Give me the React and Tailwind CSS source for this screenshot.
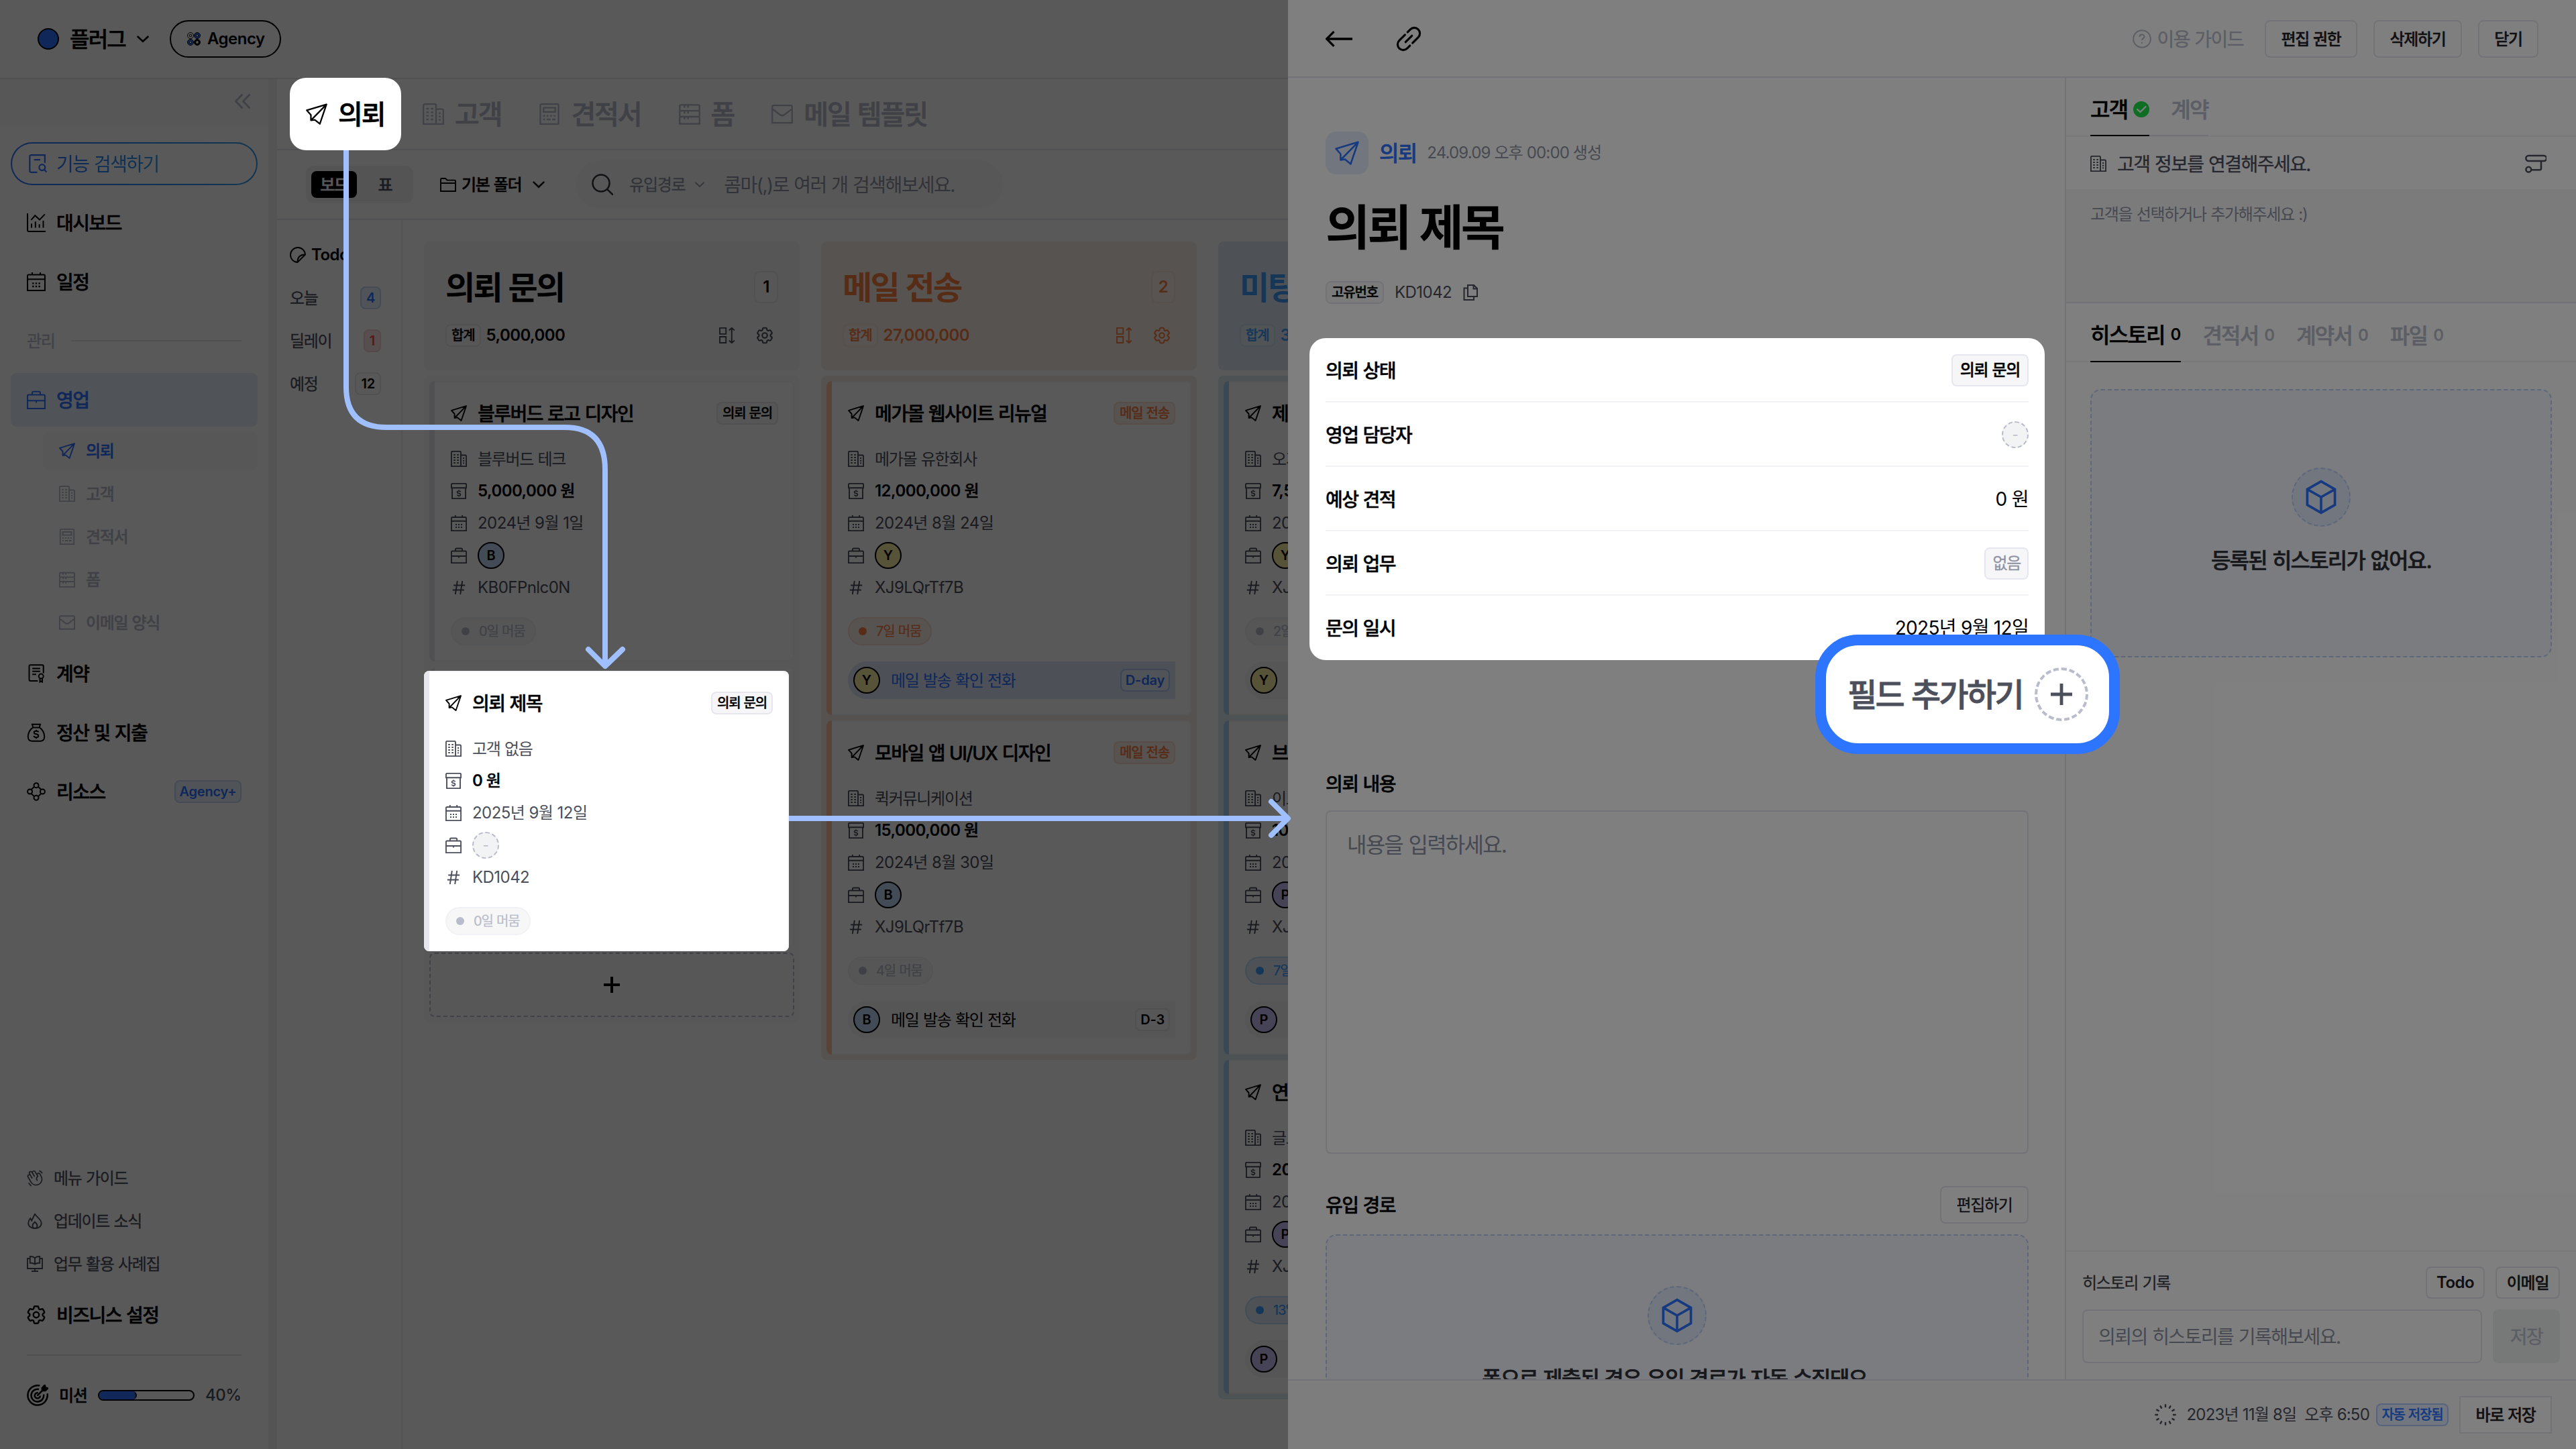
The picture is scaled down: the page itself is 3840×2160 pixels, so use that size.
import { HiOutlineCog6Tooth } from "react-icons/hi2";
import { PiHandWaving } from "react-icons/pi";

const ko20 = "text-[20px] leading-[28px] tracking-[-1.15px] [word-spacing:0.8px] whitespace-nowrap";
const ko24 = "text-[24px] leading-[34px] tracking-[-1.3px] [word-spacing:1px] whitespace-nowrap pt-px";
const ko28 = "text-[28px] leading-[40px] tracking-[-1.55px] [word-spacing:1.2px] whitespace-nowrap pt-[2px]";
const ko32 = "text-[32px] leading-[46px] tracking-[-1.8px] [word-spacing:1.4px] whitespace-nowrap pt-[2px]";
const ko40 = "text-[40px] leading-[56px] tracking-[-2.1px] [word-spacing:1.6px] whitespace-nowrap pt-px";
const ko48 = "text-[48px] leading-[64px] tracking-[-2.7px] [word-spacing:2px] whitespace-nowrap pt-[2px]";
const num20 = "text-[20px] leading-[28px] tracking-[-0.2px] whitespace-nowrap";
const num24 = "text-[24px] leading-[34px] tracking-[-0.55px] whitespace-nowrap";

// the CJK face has no weights between regular and bold, a thin stroke fills the gap
const semi = "font-medium [-webkit-text-stroke:0.016em]";
const medium = "font-normal [-webkit-text-stroke:0.012em]";

/* ---------- icons ---------- */

function Svg({ className = "size-6", sw = 1.9, children }) {
  return (
    <svg
      viewBox="0 0 24 24"
      fill="none"
      stroke="currentColor"
      strokeWidth={sw}
      className={`shrink-0 ${className}`}
    >
      {children}
    </svg>
  );
}

const PlaneIcon = (p) => (
  <Svg {...p}>
    <path d="M23 1.2 1 7.8l4.6 5.2v6l4.4-.6 5.6 4.6L23 1.2ZM23 1.2 5.6 19" strokeLinejoin="round" />
  </Svg>
);

const BuildingIcon = (p) => (
  <Svg {...p}>
    <path d="M.9 23.1V2.5Q.9.9 2.5.9h11Q15 .9 15 2.5v20.6H.9ZM15 6.5h6.500q1.600 0 1.600 1.600v15H15" />
    <path d="M4.200 6h2.600M9.300 6h2.600M4.200 10h2.600M9.300 10h2.600M4.200 14h2.600M9.300 14h2.600M4.200 18h2.600M9.300 18h2.600M18 11h2.200M18 14.700h2.200M18 18.400h2.200" />
  </Svg>
);

const EstimateIcon = (p) => (
  <Svg {...p}>
    <path d="M1.800 23.100V2.500q0-1.600 1.600-1.600h17.200q1.600 0 1.600 1.600v20.600H1.800ZM5.500 5h13v4.600h-13z" />
    <path d="M5 14h2M8.900 14h2M12.800 14h2M16.800 14h2M5 18h2M8.900 18h4.500M15 18h3.800" />
  </Svg>
);

const FormIcon = (p) => (
  <Svg {...p}>
    <path d="M2.500 1.800h19q1.600 0 1.600 1.600v3.400q0 1.600-1.600 1.600h-19Q.9 8.400.9 6.800V3.400q0-1.600 1.600-1.600ZM2.500 8.400h19q1.600 0 1.600 1.600v3.400q0 1.600-1.600 1.600h-19Q.9 15 .9 13.400V10q0-1.600 1.600-1.600ZM2.500 15h19q1.600 0 1.600 1.600v6.300H.9v-6.300Q.9 15 2.500 15Z" />
    <path d="M6.200 2v2.800M10.200 2v2.800M6.200 8.500v2.800M10.200 8.500v2.800M6.200 15v2.800M10.200 15v2.800" />
  </Svg>
);

const MailIcon = (p) => (
  <Svg {...p}>
    <path d="M.9 21.800V3.900q0-1.600 1.600-1.600h19q1.600 0 1.600 1.600v17.900H.9Z" />
    <path d="m1.300 6.500 8 6.200q2.700 2 5.400 0l8-6.200" />
  </Svg>
);

const BriefcaseIcon = (p) => (
  <Svg {...p}>
    <path d="M.9 23.100V7q0-1.500 1.500-1.500h19.200Q23.100 5.500 23.100 7v16.100H.9ZM6.900 5.500V3q0-1.500 1.500-1.500h7.200q1.500 0 1.500 1.500v2.500M.9 13h22.200M12 13v2.600" />
  </Svg>
);

const CalendarIcon = (p) => (
  <Svg {...p}>
    <path d="M.9 23.100V4.500q0-1.500 1.500-1.500h19.200q1.500 0 1.500 1.500v18.600H.9ZM.9 8.800h22.200M6.800 0v3M17.200 0v3" />
    <path d="M7 14h2M11 14h2M15 14h2M7 18h2M11 18h2M15 18h2" strokeWidth="2" />
  </Svg>
);

const MoneyBoxIcon = (p) => (
  <Svg {...p}>
    <path d="M.9 7.200V2.500Q.9.900 2.500.900h19q1.600 0 1.600 1.600v4.700H.9ZM2 7.200v15.900h20V7.200" />
    <path d="M14.700 13.300q-.5-1.300-2.700-1.300-2.500 0-2.500 1.700 0 1.300 2.500 1.700t2.500 1.800q0 1.700-2.500 1.700-2.200 0-2.700-1.500M12 10.500v1.600M12 18.900v1.500" strokeWidth="1.600" />
  </Svg>
);

const HashIcon = (p) => (
  <Svg {...p}>
    <path d="M9.800 2 6.800 22M17.200 2l-3 20M4.200 8.500h17M2.800 15.500h17" />
  </Svg>
);

const SortIcon = (p) => (
  <Svg {...p}>
    <path d="M1 .900h9.200v9H1zM1 14h9.200v9H1zM18.800 2v20M14.800 4.500 18.800.8l4 3.700M14.800 19.500l4 3.700 4-3.700" />
  </Svg>
);

const FolderIcon = (p) => (
  <Svg {...p}>
    <path d="M1 22V4.400Q1 3 2.400 3H8l2.800 2.600H21.600q1.400 0 1.400 1.400v15H1ZM1 10h22" />
  </Svg>
);

const SearchIcon = (p) => (
  <Svg {...p}>
    <circle cx="10.500" cy="10.500" r="9.400" />
    <path d="m17.500 17.500 6 5.800" strokeLinecap="round" />
  </Svg>
);

const FeatureIcon = (p) => (
  <Svg {...p}>
    <path d="M11.500 23H3.700Q2 23 2 21.300V2.700Q2 1 3.700 1h17.600v10M7.500 7h8" />
    <circle cx="17.800" cy="16.800" r="3.800" />
    <path d="m20.500 19.600 3 3.200" />
  </Svg>
);

const DashboardIcon = (p) => (
  <Svg {...p}>
    <path d="M.9 0v21.500q0 1.600 1.600 1.600H24" />
    <path d="M6 18.500v-5.500M11 18.500v-8M16 18.500v-4.500M21 18.500V9.500M5.500 8.500 10.500 2.800l5.800 5.400L23 1.200" />
  </Svg>
);

const ContractIcon = (p) => (
  <Svg {...p}>
    <path d="M14 21.500H4.600Q3 21.500 3 19.900V2.600Q3 1 4.600 1h15q1.600 0 1.600 1.600v9M7 5.500h10M7 9.200h10M7 13h5" />
    <circle cx="18.200" cy="15.500" r="3" />
    <path d="M16.700 18.200v4.600l1.500-1 1.500 1v-4.600" />
  </Svg>
);

const MoneyBagIcon = (p) => (
  <Svg {...p}>
    <path d="M8 5.500 6.800 1.500h10.400L16 5.500M8 5.500h8M8 5.500C4 7.600 1.500 13 1.500 17.200 1.500 21 3.500 23 7 23h10c3.500 0 5.500-2 5.500-5.800C22.500 13 20 7.600 16 5.500" />
    <path d="M15 11.500q-.6-1.500-3-1.500-2.800 0-2.800 2 0 1.600 2.800 2t2.800 2.200q0 2-2.800 2-2.500 0-3.100-1.800M12 8.500V10M12 18.500V20" />
  </Svg>
);

const ResourceIcon = (p) => (
  <Svg {...p}>
    <circle cx="12" cy="4" r="3" />
    <circle cx="12" cy="20" r="3" />
    <circle cx="3.900" cy="12" r="3" />
    <circle cx="20.100" cy="12" r="3" />
    <path d="M9.500 5.800 5.700 9.400M14.500 5.800l3.800 3.600M9.500 18.200l-3.800-3.600M14.500 18.200l3.800-3.600" />
  </Svg>
);

const FlameIcon = (p) => (
  <Svg {...p}>
    <path d="M12.200 1.200c.3 4 9.500 7.500 9.500 14.300 0 4.600-4 7.600-9.500 7.600s-10-3-10-7.600c0-3 1.300-5.300 3-7.300l2 3.300c1.500-3 3.400-6.500 5-10.300Z" />
    <path d="M12 13.500c-2 1.800-3.500 3.300-3.500 5.600 0 2.500 1.500 4 3.500 4s3.500-1.500 3.500-4c0-2.300-1.500-3.800-3.500-5.600Z" />
  </Svg>
);

const CasebookIcon = (p) => (
  <Svg {...p}>
    <path d="M4.500 4H1v15h22V4h-3.500M12 19v4M7 23h10M12 3.500C10 1 7.500.8 4.800 1v9.800c2.700-.2 5.200 0 7.200 1.700 2-1.700 4.500-1.900 7.200-1.700V1C16.500.8 14 1 12 3.500Zm0 0v9" />
  </Svg>
);

const TargetIcon = (p) => (
  <Svg {...p}>
    <path d="M14.500 1.200A11 11 0 1 0 22.900 10M13.500 5.300A7 7 0 1 0 18.800 11M12.500 9.200A3.100 3.100 0 1 0 15 12.500M11.500 12.500 18 6" />
    <path d="M17.200 6.800V3.500L20 .8l.8 2.500 2.600.8-2.800 2.700Z" fill="currentColor" />
  </Svg>
);

const StickerIcon = (p) => (
  <Svg {...p}>
    <path d="M11.500 23A11 11 0 1 1 23 11.500L11.500 23ZM11.500 23c0-8 3.500-11.500 11.500-11.500" />
  </Svg>
);

const ChevronDown = (p) => (
  <Svg {...p}>
    <path d="m3 8 9 8.500L21 8" strokeLinecap="round" />
  </Svg>
);

const CubeIcon = (p) => (
  <Svg {...p}>
    <path d="M12 1.200 21.500 6.600v10.800L12 22.800 2.500 17.400V6.600L12 1.200ZM2.500 6.600 12 12l9.500-5.400M12 12v10.800" />
  </Svg>
);

const LinkIcon = (p) => (
  <Svg {...p}>
    <g transform="rotate(-45 12 12)" strokeLinecap="round">
      <path d="M8.500 17H5a5 5 0 0 1 0-10h7.200M15.500 7H19a5 5 0 0 1 0 10h-7.200M8 12h8" />
    </g>
  </Svg>
);

const CopyIcon = (p) => (
  <Svg {...p}>
    <path d="M8 1h9l5 5v12H8V1ZM16.500 1v5.500H22M8 5.500H2.500V23H17v-5" />
  </Svg>
);

const ConnectIcon = (p) => (
  <Svg {...p}>
    <path d="M4 3h17a2.400 2.400 0 0 1 0 6H4a2.900 2.900 0 0 1 0-6ZM7 19h9.500q1.500 0 1.500-1.500V9.500" />
    <circle cx="4" cy="18.500" r="2.900" />
  </Svg>
);

const GearIcon = ({ large }) => (
  <HiOutlineCog6Tooth
    strokeWidth={1.7}
    className={`shrink-0 ${large ? "-mx-[3px] size-[34px]" : "-m-[3px] size-[30px]"}`}
  />
);

const WaveIcon = () => <PiHandWaving className="-mx-0.5 size-7 shrink-0" />;

function AgencyMark() {
  return (
    <svg viewBox="0 0 20 20" className="size-5">
      <g strokeWidth="2.600" fill="none">
        <circle cx="5" cy="5" r="3.200" stroke="#fff" />
        <circle cx="15" cy="5" r="3.200" stroke="#2d72ff" />
        <circle cx="5" cy="15" r="3.200" stroke="#2d72ff" />
        <circle cx="15" cy="15" r="3.200" stroke="#000" />
      </g>
      <g fill="none" stroke="#000" strokeWidth=".9">
        <circle cx="5" cy="5" r="4.500" />
        <circle cx="15" cy="5" r="4.500" />
        <circle cx="5" cy="15" r="4.500" />
        <circle cx="15" cy="15" r="4.500" />
        <circle cx="5" cy="5" r="1.800" />
        <circle cx="15" cy="5" r="1.800" />
        <circle cx="5" cy="15" r="1.800" />
      </g>
    </svg>
  );
}

function Spinner() {
  return (
    <Svg className="size-8" sw={1.800}>
      {Array.from({ length: 12 }).map((_, i) => (
        <path key={i} d="M12 .2v3.600" transform={`rotate(${i * 30} 12 12)`} />
      ))}
    </Svg>
  );
}

/* ---------- sidebar ---------- */

function NavRow({ icon: Icon, label, active, children }) {
  return (
    <div
      className={`flex h-20 items-center gap-4 rounded-lg px-6 ${
        active ? "bg-[#e5eefb] text-[#2d72ff]" : "text-black"
      }`}
    >
      <Icon className="size-7" sw={1.7} large />
      <span className={`${ko28} ${semi}`}>{label}</span>
      {children}
    </div>
  );
}

function SubRow({ icon: Icon, label, active }) {
  return (
    <div
      className={`ml-12 flex h-14 items-center gap-4 rounded-lg px-6 ${
        active ? "bg-[#f9fafd] text-[#2d72ff]" : "text-[#b8bccb]"
      }`}
    >
      <Icon />
      <span className={`${ko24} ${semi}`}>{label}</span>
    </div>
  );
}

function HelpRow({ icon: Icon, label }) {
  return (
    <div className="flex h-16 items-center gap-4 px-6 text-[#4c4f5c]">
      <Icon />
      <span className={`${ko24} ${medium}`}>{label}</span>
    </div>
  );
}

function Sidebar() {
  return (
    <aside className="flex w-[400px] shrink-0 flex-col">
      <div className="flex h-[70px] items-center justify-end bg-[#fafafb] pr-[26px] pb-1 text-[#b8bccb]">
        <Svg sw={2.800}>
          <path d="M11.500 1.500 1.500 12l10 10.500M22.500 1.500l-10 10.500 10 10.500" strokeLinejoin="round" />
        </Svg>
      </div>
      <nav className="flex flex-1 flex-col gap-2 px-4 pt-6">
        <div className="rounded-full bg-gradient-to-r from-[#2d72ff] to-[#3399e6] p-[2px]">
          <div className="flex h-[60px] items-center gap-[14px] rounded-full bg-white pl-6">
            <FeatureIcon className="size-[28px] text-[#2d72ff]" />
            <span
              className={`${ko28} bg-gradient-to-r from-[#2d72ff] to-[#3399e6] bg-clip-text text-transparent`}
            >
              기능 검색하기
            </span>
          </div>
        </div>
        <div className="mt-2">
          <NavRow icon={DashboardIcon} label="대시보드" />
        </div>
        <NavRow icon={CalendarIcon} label="일정" />
        <div className="flex h-20 items-center gap-6 px-6">
          <span className={`${ko24} ${medium} text-[#b8bccb]`}>관리</span>
          <div className="h-[2px] flex-1 bg-[#e6e7ec]" />
        </div>
        <NavRow icon={BriefcaseIcon} label="영업" active />
        <SubRow icon={PlaneIcon} label="의뢰" active />
        <SubRow icon={BuildingIcon} label="고객" />
        <SubRow icon={EstimateIcon} label="견적서" />
        <SubRow icon={FormIcon} label="폼" />
        <SubRow icon={MailIcon} label="이메일 양식" />
        <NavRow icon={ContractIcon} label="계약" />
        <NavRow icon={MoneyBagIcon} label="정산 및 지출" />
        <NavRow icon={ResourceIcon} label="리소스">
          <span
            className={`${num20} ml-auto flex h-[34px] w-[100px] items-center justify-center rounded-lg border-2 border-[#c6d5f5] bg-[#e5eefb] font-semibold text-[#2d72ff]`}
          >
            Agency+
          </span>
        </NavRow>
      </nav>
      <div className="flex h-[436px] flex-col px-4">
        <HelpRow icon={WaveIcon} label="메뉴 가이드" />
        <HelpRow icon={FlameIcon} label="업데이트 소식" />
        <HelpRow icon={CasebookIcon} label="업무 활용 사례집" />
        <div className="mt-1">
          <NavRow icon={GearIcon} label="비즈니스 설정" />
        </div>
        <div className="mx-6 mt-[19px] h-[2px] bg-[#e6e7ec]" />
        <div className="mt-[43px] flex h-8 items-center px-6">
          <TargetIcon className="size-8" />
          <span className={`${ko24} ${semi} ml-4 w-[42px]`}>미션</span>
          <div className="ml-4 h-4 w-36 overflow-hidden rounded-full border-2 border-black">
            <div className="h-full w-[40%] rounded-r-full border-r-2 border-black bg-[#2d72ff]" />
          </div>
          <span className={`${num24} ml-4 font-medium text-[#4c4f5c]`}>40%</span>
        </div>
      </div>
    </aside>
  );
}

/* ---------- board ---------- */

const TONES = {
  gray: {
    text: "text-black",
    head: "bg-[#f6f6f8]",
    body: "bg-[#fbfbfc]",
    strip: "bg-[#e6e7ee]",
    chip: "border-[#e6e7ee] bg-[#f6f6f8] text-black",
    box: "border-[#e9eaf0] bg-[#fafafc]",
    icon: "text-[#4c4f5c]",
  },
  orange: {
    text: "text-[#fb7f42]",
    head: "bg-[#faefe6]",
    body: "bg-[#f8ece3]",
    strip: "bg-[#fbc0a0]",
    chip: "border-[#fbdccc] bg-[#fbf0e9] text-[#fb7f42]",
    box: "border-[#fbe2d5] bg-[#fbf1eb]",
    icon: "text-[#fb7f42]",
  },
  blue: {
    text: "text-[#3f9dfa]",
    head: "bg-[#e0edf6]",
    body: "bg-[#deebf5]",
    strip: "bg-[#a8cff2]",
    chip: "border-[#bcdcf7] bg-[#e6f1fb] text-[#3f9dfa]",
    box: "border-[#cce2f5] bg-[#e6f1fb]",
    icon: "text-[#3f9dfa]",
  },
};

const AVATARS = {
  B: "border-black bg-[#c2d7fa]",
  Y: "border-black bg-[#fbeea4]",
  P: "border-black bg-[#cdc2fa]",
};

function Avatar({ name }) {
  if (!name) {
    return (
      <span className="flex size-10 shrink-0 items-center justify-center rounded-full border-2 border-dashed border-[#b8bccb] bg-[#f2f3f5] text-[20px] leading-none text-[#b8bccb]">
        -
      </span>
    );
  }
  return (
    <span
      className={`flex size-10 shrink-0 items-center justify-center rounded-full border-2 text-[20px] leading-none font-semibold text-black ${AVATARS[name]}`}
    >
      {name}
    </span>
  );
}

function CardRow({ icon: Icon, children }) {
  return (
    <div className="flex h-12 items-center gap-4 text-[#4c4f5c]">
      <Icon />
      {children}
    </div>
  );
}

function Card({ tone, title, status, client, price, date, manager, code, stay, stayTone = "mute", task }) {
  const t = TONES[tone];
  const stayClass = {
    mute: "border-[#f0f1f4] bg-[#f7f7f8] text-[#b8bccb]",
    orange: "border-[#fbdccc] bg-[#fbf0e9] text-[#fb7f42]",
    blue: "border-[#bcdcf7] bg-[#e0edf6] text-[#3f9dfa]",
  }[stayTone];
  const stayDot = { mute: "bg-[#b8bccb]", orange: "bg-[#fb7f42]", blue: "bg-[#3f9dfa]" }[stayTone];
  return (
    <div className="flex w-[544px] shrink-0 overflow-hidden rounded-lg bg-white">
      <div className={`w-2 shrink-0 ${t.strip}`} />
      <div className="flex-1 rounded-r-lg border-y-2 border-r-2 border-[#f7f7f9] py-[22px] pr-[22px] pl-6">
        <div className="flex h-12 items-center text-black">
          <PlaneIcon />
          <span className={`${ko28} ${semi} ml-4`}>{title}</span>
          <span className={`${ko20} ${semi} ml-auto flex h-[34px] items-center rounded-lg border-2 px-[7px] ${t.chip}`}>
            {status}
          </span>
        </div>
        <div className="mt-5">
          <CardRow icon={BuildingIcon}>
            <span className={ko24}>{client}</span>
          </CardRow>
          <CardRow icon={MoneyBoxIcon}>
            <span className={`${num24} font-semibold text-black`}>
              {price} <span className={semi}>원</span>
            </span>
          </CardRow>
          <CardRow icon={CalendarIcon}>
            <span className={num24}>{date}</span>
          </CardRow>
          <CardRow icon={BriefcaseIcon}>
            <Avatar name={manager} />
          </CardRow>
          <CardRow icon={HashIcon}>
            <span className={num24}>{code}</span>
          </CardRow>
        </div>
        <div
          className={`mt-5 flex h-[42px] w-fit items-center gap-[14px] rounded-full border-2 px-[14px] ${stayClass}`}
        >
          <span className={`size-3 rounded-full ${stayDot}`} />
          <span className={`${ko20} ${medium}`}>{stay}일 머뭄</span>
        </div>
        {task && (
          <div
            className={`mt-6 flex h-14 items-center rounded-l-full rounded-r-lg px-2 ${
              task.due === "D-day" ? "bg-[#dde6f6] text-[#2d72ff]" : "bg-[#f6f6f8] text-black"
            }`}
          >
            <Avatar name={task.who} />
            <span className={`${ko24} ml-4`}>메일 발송 확인 전화</span>
            <span
              className={`${num20} ml-auto flex h-[34px] items-center rounded-lg border-2 px-1.5 font-semibold ${
                task.due === "D-day"
                  ? "border-[#b4c8f3] bg-[#e5eefb]"
                  : "border-[#e6e7ee] bg-[#fafafc]"
              }`}
            >
              {task.due}
            </span>
          </div>
        )}
      </div>
    </div>
  );
}

function Column({ tone, title, count, total, cards, children }) {
  const t = TONES[tone];
  return (
    <div className="flex w-[560px] shrink-0 flex-col gap-2">
      <div className={`flex h-48 flex-col rounded-lg px-8 ${t.head} ${t.text}`}>
        <div className="mt-9 flex h-16 items-center justify-between">
          <span className={`${ko48} font-bold`}>{title}</span>
          <span
            className={`${num24} flex h-12 min-w-9 items-center justify-center rounded-lg border-2 px-2 font-semibold ${t.box}`}
          >
            {count}
          </span>
        </div>
        <div className="mt-6 flex h-8 items-center">
          <span className={`${ko20} ${semi} flex h-[34px] items-center rounded-lg border-2 px-[7px] ${t.box}`}>
            합계
          </span>
          <span className={`${num24} ml-2 font-semibold`}>{total}</span>
          <div className={`mr-2 ml-auto flex gap-8 ${t.icon}`}>
            <SortIcon />
            <GearIcon />
          </div>
        </div>
      </div>
      <div className={`flex flex-col gap-2 rounded-lg p-2 ${t.body}`}>
        {cards.map((c, i) => (
          <Card key={i} tone={tone} status={title} {...c} />
        ))}
        {children}
      </div>
    </div>
  );
}

const newRequest = {
  title: "의뢰 제목",
  client: "고객 없음",
  price: "0",
  date: "2025년 9월 12일",
  code: "KD1042",
  stay: 0,
};

const inquiryCards = [
  {
    title: "블루버드 로고 디자인",
    client: "블루버드 테크",
    price: "5,000,000",
    date: "2024년 9월 1일",
    manager: "B",
    code: "KB0FPnlc0N",
    stay: 0,
  },
];

const mailCards = [
  {
    title: "메가몰 웹사이트 리뉴얼",
    client: "메가몰 유한회사",
    price: "12,000,000",
    date: "2024년 8월 24일",
    manager: "Y",
    code: "XJ9LQrTf7B",
    stay: 7,
    stayTone: "orange",
    task: { who: "Y", due: "D-day" },
  },
  {
    title: "모바일 앱 UI/UX 디자인",
    client: "퀵커뮤니케이션",
    price: "15,000,000",
    date: "2024년 8월 30일",
    manager: "B",
    code: "XJ9LQrTf7B",
    stay: 4,
    task: { who: "B", due: "D-3" },
  },
];

const meetingCards = [
  {
    title: "제품",
    client: "오가닉",
    price: "7,500,000",
    date: "2024년",
    manager: "Y",
    code: "XJ9LQrTf7B",
    stay: 2,
    task: { who: "Y", due: "D-3" },
  },
  {
    title: "브랜드",
    client: "이노",
    price: "10,000,000",
    date: "2024년",
    manager: "P",
    code: "XJ9LQrTf7B",
    stay: 7,
    stayTone: "blue",
    task: { who: "P", due: "D-3" },
  },
  {
    title: "연간",
    client: "글로벌",
    price: "20,000,000",
    date: "2024년",
    manager: "P",
    code: "XJ9LQrTf7B",
    stay: 13,
    stayTone: "blue",
    task: { who: "P", due: "D-3" },
  },
];

function TopTab({ icon: Icon, label }) {
  return (
    <div className="flex items-center gap-4 text-[#b8bccb]">
      <Icon className="size-8" sw={1.7} />
      <span className={`${ko40} ${semi}`}>{label}</span>
    </div>
  );
}

function TodoRow({ label, count, badge }) {
  return (
    <div className="flex h-16 items-center justify-between">
      <span className={`${ko24} ${medium} text-[#4c4f5c]`}>{label}</span>
      <span className={`${num20} flex h-[34px] items-center rounded-lg border-2 px-[7px] font-semibold ${badge}`}>
        {count}
      </span>
    </div>
  );
}

function Workspace() {
  return (
    <main className="flex min-w-0 flex-1 flex-col border-l-[13px] border-[#f3f3f5]">
      <div className="flex h-[106px] shrink-0 items-center border-b-2 border-[#e6e7ec] pl-[19px]">
        {/* active tab stays lit above the dimmed page */}
        <div className="relative z-20 flex h-[108px] w-[166px] shrink-0 items-center gap-4 rounded-3xl bg-white pl-6 text-black">
          <PlaneIcon className="size-8" sw={1.700} />
          <span className={`${ko40} ${semi}`}>의뢰</span>
        </div>
        <div className="ml-8 flex gap-14">
          <TopTab icon={BuildingIcon} label="고객" />
          <TopTab icon={EstimateIcon} label="견적서" />
          <TopTab icon={FormIcon} label="폼" />
          <TopTab icon={MailIcon} label="메일 템플릿" />
        </div>
      </div>

      <div className="flex h-[104px] shrink-0 items-center border-b-2 border-[#e6e7ec] pl-[43px]">
        <div className="flex h-14 w-40 items-center gap-2 rounded-xl bg-[#f3f3f5] px-2">
          <span className={`${ko24} ${semi} flex h-10 w-[68px] items-center justify-center rounded-lg bg-black text-white`}>
            보드
          </span>
          <span className={`${ko24} ${semi} flex w-[68px] justify-center text-[#4c4f5c]`}>표</span>
        </div>
        <FolderIcon className="ml-10 size-6 text-black" />
        <span className={`${ko24} ${semi} ml-2`}>기본 폴더</span>
        <ChevronDown className="ml-4 size-5" sw={3} />
        <div className="ml-[46px] flex h-[72px] w-[636px] items-center rounded-full bg-[#fbfbfc] pl-[23px]">
          <SearchIcon className="size-8 text-[#33353d]" sw={1.900} />
          <span className={`${ko24} ${medium} ml-6 text-[#8f93a3]`}>유입경로</span>
          <ChevronDown className="ml-3.5 size-4 text-[#8f93a3]" sw={2.600} />
          <span className={`${ko28} ml-7 text-[#8f93a3]`}>콤마(,)로 여러 개 검색해보세요.</span>
        </div>
      </div>

      <div className="flex min-h-0 flex-1">
        <div className="w-[187px] shrink-0 border-r-2 border-[#f0f0f3] pt-[35px] pr-[30px] pl-[19px]">
          <div className="mb-[15px] flex items-center gap-2">
            <StickerIcon />
            <span className={`${num24} font-semibold`}>Todo</span>
          </div>
          <TodoRow label="오늘" count="4" badge="border-[#c6d5f5] bg-[#e5eefb] text-[#2d72ff]" />
          <TodoRow label="딜레이" count="1" badge="border-[#f7cfcf] bg-[#fae3e3] text-[#ff4343]" />
          <TodoRow label="예정" count="12" badge="border-[#e9eaf0] bg-[#fcfcfd] text-black" />
        </div>
        <div className="flex items-start gap-8 overflow-hidden pt-8 pl-8">
          <Column tone="gray" title="의뢰 문의" count="1" total="5,000,000" cards={inquiryCards}>
            {/* slot of the card that is lifted out of the list */}
            <div className="h-[418px] overflow-hidden rounded-lg border-2 border-[#f7f7f9] bg-white">
              <div className="h-full w-1.5 bg-[#e6e7ee]" />
            </div>
            <div className="flex h-24 items-center justify-center rounded-lg border-2 border-dashed border-[#b8bccb]">
              <Svg sw={4}>
                <path d="M12 0v24M0 12h24" />
              </Svg>
            </div>
          </Column>
          <Column tone="orange" title="메일 전송" count="2" total="27,000,000" cards={mailCards} />
          <Column tone="blue" title="미팅 예정" count="3" total="37,500,000" cards={meetingCards} />
        </div>
      </div>
    </main>
  );
}

/* ---------- drawer ---------- */

function OutlineButton({ children, className = "" }) {
  return (
    <button
      className={`${ko24} flex shrink-0 items-center justify-center rounded-lg border-2 border-[#e6e7ee] bg-white text-[#1f2026] ${className}`}
    >
      {children}
    </button>
  );
}

function EmptyBox({ text, className = "" }) {
  return (
    <div
      className={`flex shrink-0 flex-col items-center rounded-2xl border-2 border-dashed border-[#bccdf5] bg-[#f6f8ff] ${className}`}
    >
      <div className="flex size-[88px] items-center justify-center rounded-full border-2 border-dashed border-[#bccdf5] bg-[#e5efff] text-[#2d72ff]">
        <CubeIcon className="size-[52px]" sw={1.700} />
      </div>
      <p className={`${ko32} ${semi} mt-[26px] text-[#2f3138]`}>{text}</p>
    </div>
  );
}

function Field({ label, children, last }) {
  return (
    <div
      className={`flex h-24 items-center justify-between text-black ${
        last ? "" : "border-b-2 border-[#f2f3f5] pt-px"
      }`}
    >
      <span className={`${ko28} ${semi}`}>{label}</span>
      {children}
    </div>
  );
}

function CountTab({ label, active }) {
  return (
    <div
      className={`flex h-full items-center gap-[9px] pt-2 ${
        active ? "border-b-2 border-black text-black" : "text-[#b8bccb]"
      }`}
    >
      <span className={`${ko32} ${semi}`}>{label}</span>
      <span className="text-[24px] leading-none font-semibold">0</span>
    </div>
  );
}

function RequestForm() {
  return (
    <section className="flex w-[1158px] shrink-0 flex-col overflow-hidden pt-20 pr-[54px] pl-14">
      <div className="flex h-16 shrink-0 items-center">
        <div className="flex size-16 items-center justify-center rounded-2xl bg-[#e5efff] text-[#2d72ff]">
          <PlaneIcon className="size-9" sw={1.700} />
        </div>
        <span className={`${ko32} ${semi} ml-4 text-[#2d72ff]`}>의뢰</span>
        <span className="ml-4 text-[24px] tracking-[-0.85px] whitespace-nowrap text-[#8f93a3]">
          24.09.09 오후 00:00 생성
        </span>
      </div>
      <h1 className="mt-[35px] shrink-0 text-[72px] leading-[88px] font-bold tracking-[-4px] [word-spacing:2px] whitespace-nowrap text-black">
        의뢰 제목
      </h1>
      <div className="mt-[35px] flex h-9 shrink-0 items-center">
        <span className={`${ko20} ${semi} flex h-[34px] items-center rounded-lg border-2 border-[#e6e7ee] bg-[#f6f6f8] px-[7px]`}>
          고유번호
        </span>
        <span className={`${num24} ml-4 text-[#4c4f5c]`}>KD1042</span>
        <CopyIcon className="ml-4 size-6 text-[#4c4f5c]" sw={2} />
      </div>

      {/* highlighted field list */}
      <div className="relative z-20 -mx-6 mt-[50px] h-[480px] shrink-0 rounded-3xl bg-white px-6">
        <Field label="의뢰 상태">
          <span className={`${ko24} ${semi} flex h-12 items-center rounded-lg border-2 border-[#e6e7ee] bg-[#f6f6f8] px-[11px]`}>
            의뢰 문의
          </span>
        </Field>
        <Field label="영업 담당자">
          <Avatar />
        </Field>
        <Field label="예상 견적">
          <span className="text-[28px] tracking-[-0.6px]">0 원</span>
        </Field>
        <Field label="의뢰 업무">
          <span className={`${ko24} ${medium} flex h-12 items-center rounded-lg border-2 border-[#e6e7ee] bg-[#f6f6f8] px-[10px] text-[#8f93a3]`}>
            없음
          </span>
        </Field>
        <Field label="문의 일시" last>
          <span className="text-[28px] tracking-[-0.7px]">2025년 9월 12일</span>
        </Field>
      </div>

      <span className={`${ko28} ${semi} mt-[163px] shrink-0 text-black`}>의뢰 내용</span>
      <div className="mt-[19px] h-[512px] shrink-0 rounded-lg border-2 border-[#e6e7ee] px-[30px] pt-[25px]">
        <p className={`${ko32} text-[#8f93a3]`}>내용을 입력하세요.</p>
      </div>
      <div className="mt-12 flex h-14 shrink-0 items-center justify-between">
        <span className={`${ko28} ${semi} text-black`}>유입 경로</span>
        <OutlineButton className={`h-14 w-[132px] ${medium}`}>편집하기</OutlineButton>
      </div>
      <EmptyBox
        text="폼으로 제출된 경우 유입 경로가 자동 수집돼요."
        className="mt-4 h-[400px] pt-[75px]"
      />
    </section>
  );
}

function SidePanel() {
  return (
    <section className="flex flex-1 flex-col border-l-2 border-[#e6e7ee]">
      <div className="flex h-[88px] shrink-0 items-center border-b-2 border-[#f2f3f5] pl-9">
        <div className="flex h-[88px] shrink-0 items-center gap-[9px] border-b-2 border-black pt-[10px] text-black">
          <span className={`${ko32} ${semi}`}>고객</span>
          <svg viewBox="0 0 24 24" className="size-6">
            <circle cx="12" cy="12" r="12" fill="#1ddc46" />
            <path d="m6 12 4.500 4L18.500 8" fill="none" stroke="#fff" strokeWidth="2.200" strokeLinecap="round" />
          </svg>
        </div>
        <div className="flex h-[88px] shrink-0 items-center border-b-2 border-[#e6e7ee] pt-[10px] pl-8 text-[#b8bccb]">
          <span className={`${ko32} ${semi}`}>계약</span>
        </div>
      </div>
      <div className="flex h-20 shrink-0 items-center border-b-2 border-[#f2f3f5] pt-[2px] pr-11 pl-9 text-[#4c4f5c]">
        <BuildingIcon />
        <span className={`${ko28} ${medium} ml-4`}>고객 정보를 연결해주세요.</span>
        <ConnectIcon className="ml-auto size-8" sw={1.900} />
      </div>
      <div className="h-[168px] shrink-0 border-b-2 border-[#e6e7ee] bg-[#f7f7f8] pt-[18px] pl-9">
        <p className={`${ko24} text-[#8f93a3]`}>고객을 선택하거나 추가해주세요 :)</p>
      </div>
      <div className="flex h-[88px] shrink-0 gap-8 border-b-2 border-[#f2f3f5] pl-9">
        <div className="flex h-[88px] shrink-0 gap-8">
          <CountTab label="히스토리" active />
          <CountTab label="견적서" />
          <CountTab label="계약서" />
          <CountTab label="파일" />
        </div>
      </div>
      <EmptyBox text="등록된 히스토리가 없어요." className="mt-10 mr-9 ml-9 h-[400px] pt-[115px]" />

      <div className="mt-auto h-[192px] border-t-2 border-[#f2f3f5] px-6 pt-[22px]">
        <div className="flex h-12 items-center">
          <span className={`${ko24} ${medium} mr-auto text-[#3c3f4a]`}>히스토리 기록</span>
          <button className="flex h-12 w-[88px] items-center justify-center rounded-lg border-2 border-[#e6e7ee] text-[24px] font-semibold tracking-[-0.5px] text-[#1f2026]">
            Todo
          </button>
          <OutlineButton className={`ml-4 h-12 w-24 ${semi}`}>이메일</OutlineButton>
        </div>
        <div className="mt-4 flex h-20 gap-4">
          <div className="flex flex-1 items-center rounded-lg border-2 border-[#e6e7ee] pl-[22px]">
            <span className={`${ko28} text-[#8f93a3]`}>의뢰의 히스토리를 기록해보세요.</span>
          </div>
          <div className={`${ko28} ${medium} flex w-[100px] items-center justify-center rounded-lg bg-[#eef2f2] text-[#b8bccb]`}>
            저장
          </div>
        </div>
      </div>
    </section>
  );
}

function Drawer() {
  return (
    <div className="absolute inset-y-0 right-0 flex w-[1920px] flex-col bg-white">
      <header className="flex h-[116px] shrink-0 items-center border-b-2 border-[#e6e7ee] pt-[2px] pr-14 pl-14">
        <Svg className="size-10" sw={2}>
          <path d="M24 12H1M7.500 5.500 1 12l6.500 6.500" strokeLinejoin="round" />
        </Svg>
        <LinkIcon className="ml-16 size-10" sw={1.900} />
        <div className="ml-auto flex items-center text-[#b8bccb]">
          <Svg className="size-7" sw={1.700}>
            <circle cx="12" cy="12" r="11" />
            <path d="M9 9.500c0-4 6-4 6-.3 0 2.300-3 2.200-3 4.600M12 16v1.800" />
          </Svg>
          <span className={`${ko28} ${medium} ml-2`}>이용 가이드</span>
        </div>
        <OutlineButton className={`ml-8 h-14 w-[138px] ${semi}`}>편집 권한</OutlineButton>
        <OutlineButton className={`ml-6 h-14 w-[132px] ${semi}`}>삭제하기</OutlineButton>
        <OutlineButton className={`ml-6 h-14 w-[90px] ${semi}`}>닫기</OutlineButton>
      </header>
      <div className="flex min-h-0 flex-1">
        <RequestForm />
        <SidePanel />
      </div>
      <footer className="flex h-[104px] shrink-0 items-center justify-end border-t-2 border-[#e6e7ee] bg-[#fafafa] pr-9 text-[#4c4f5c]">
        <Spinner />
        <span className="ml-4 text-[24px] tracking-[-0.8px] whitespace-nowrap">2023년 11월 8일&nbsp; 오후 6:50</span>
        <span className={`${ko20} ${semi} ml-2.5 flex h-[34px] w-[108px] items-center justify-center rounded-lg border-2 border-[#adc8ff] bg-[#e5efff] text-[#2d72ff]`}>
          자동 저장됨
        </span>
        <span className={`${ko24} ${semi} ml-4 flex h-14 w-[138px] items-center justify-center border-2 border-[#e6e7ee] bg-white text-[#1f2026]`}>
          바로 저장
        </span>
      </footer>
    </div>
  );
}

/* ---------- guide layer ---------- */

function GuideArrows() {
  return (
    <svg
      viewBox="0 0 3840 2160"
      className="absolute inset-0 z-20 size-full"
      fill="none"
      stroke="#9fbfff"
      strokeWidth="8"
    >
      <path d="M516 224V577Q516 637 576 637H842Q902 637 902 700V990" />
      <path d="M877 968 902 993 928 968" strokeLinecap="round" strokeLinejoin="round" />
      <path d="M1176 1220H1918" />
      <path d="M1895 1195 1920 1220 1895 1245" strokeLinecap="round" strokeLinejoin="round" />
    </svg>
  );
}

export default function App() {
  return (
    <div className="relative h-[2160px] w-[3840px] overflow-hidden bg-white font-['Inter','Noto_Sans_CJK_KR',sans-serif] text-black">
      <div className="flex h-full w-full flex-col">
        <header className="flex h-[118px] shrink-0 items-center border-b-2 border-[#e6e7ec] pl-14">
          <span className="size-8 rounded-full border-2 border-black bg-[#2d72ff]" />
          <span className={`${ko32} ${semi} ml-4`}>플러그</span>
          <ChevronDown className="ml-4 size-5" sw={3.200} />
          <div className="ml-[30px] flex h-14 w-[166px] items-center gap-[10px] rounded-full border-2 border-black pl-6">
            <AgencyMark />
            <span className="text-[24px] font-semibold tracking-[-0.5px]">Agency</span>
          </div>
        </header>
        <div className="flex min-h-0 flex-1">
          <Sidebar />
          <Workspace />
        </div>
      </div>

      <div className="absolute inset-0 bg-black/30" />
      <Drawer />
      <div className="absolute inset-0 z-10 bg-black/50" />

      <div className="absolute top-[1000px] left-[632px] z-20">
        <Card tone="gray" status="의뢰 문의" {...newRequest} />
      </div>
      <GuideArrows />
      <div className="absolute top-[946px] left-[2706px] z-30 flex h-[178px] w-[454px] items-center rounded-[64px] border-[16px] border-[#2d75ff] bg-white pl-8 text-[#4c4f5c]">
        <span className={`${ko48} ${semi}`}>필드 추가하기</span>
        <span className="ml-[18px] flex size-20 shrink-0 items-center justify-center rounded-full border-4 border-dashed border-[#b8bccb]">
          <Svg className="size-8" sw={3.600}>
            <path d="M12 0v24M0 12h24" />
          </Svg>
        </span>
      </div>
    </div>
  );
}
